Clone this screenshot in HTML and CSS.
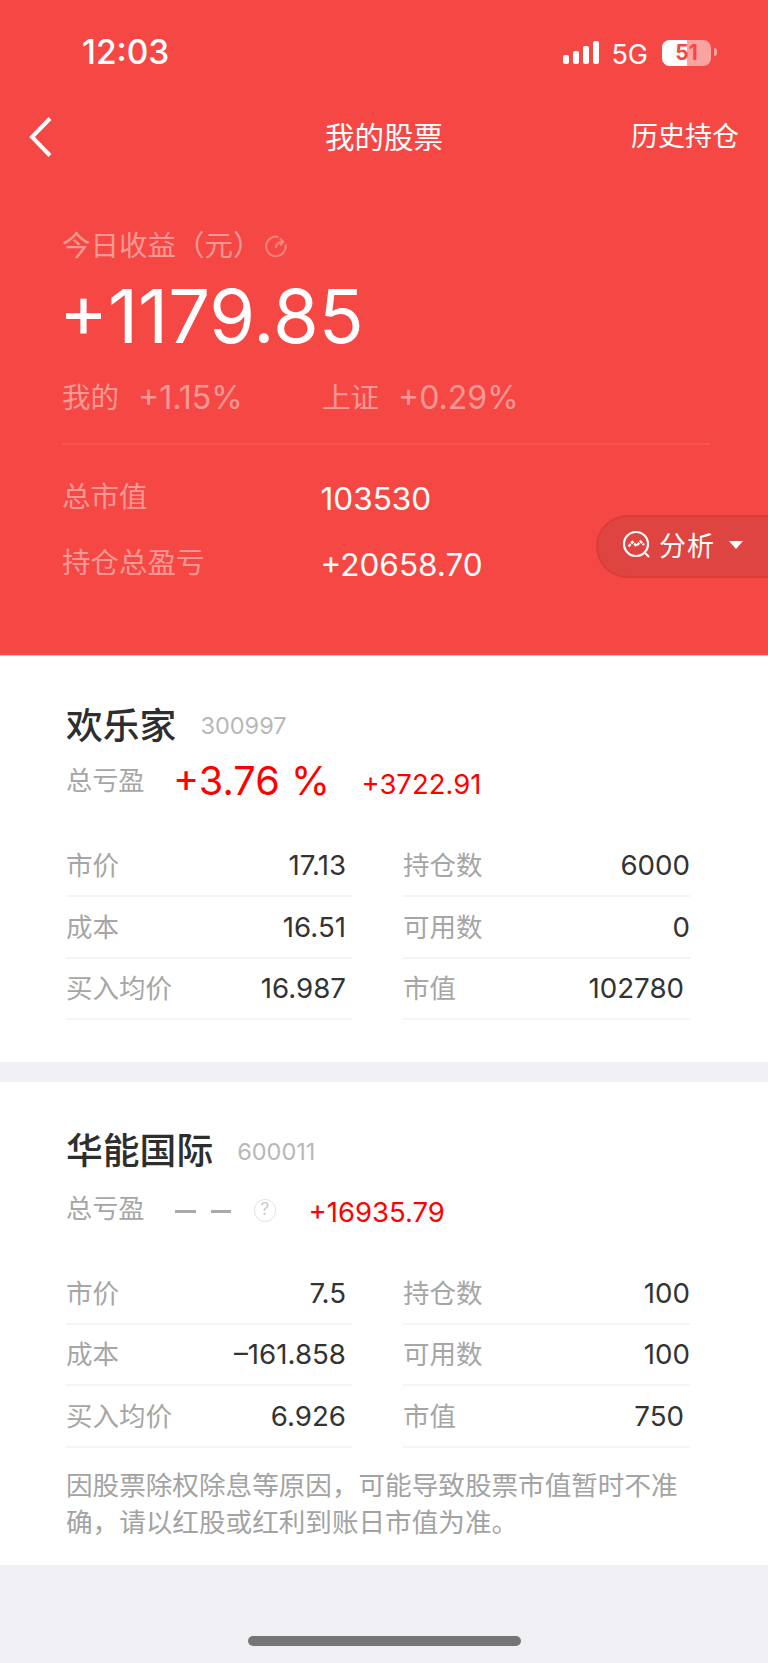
FILE: index.html
```html
<!DOCTYPE html>
<html lang="zh-CN">
<head>
<meta charset="utf-8">
<title>我的股票</title>
<link rel="stylesheet" href="styles.css">
</head>
<body>
<div class="page">
  <header class="hero">
    <div class="status">
      <span class="clock">12:03</span>
      <div class="status-right">
        <svg class="signal" width="38" height="23" viewBox="0 0 38 23"><rect x="1" y="14" width="6" height="9" rx="2"/><rect x="11" y="10" width="6" height="13" rx="2"/><rect x="21" y="5" width="6" height="18" rx="2"/><rect x="31" y="0" width="6" height="23" rx="2"/></svg>
        <span class="net">5G</span>
        <div class="battery"><div class="battery-fill"></div><span class="battery-num">51</span></div>
        <span class="battery-cap"></span>
      </div>
    </div>
    <nav class="navbar">
      <svg class="back" width="28" height="42" viewBox="0 0 28 42"><path d="M25 2.500 L7 21 L25 39.500" fill="none" stroke="#fff" stroke-width="4"/></svg>
      <span class="nav-title">我的股票</span>
      <span class="nav-action">历史持仓</span>
    </nav>
    <div class="summary">
      <div class="today-label">今日收益（元）
        <svg class="refresh" width="24" height="24" viewBox="0 0 24 24"><path d="M14.500 3 A9.800 9.800 0 1 0 21.500 10.500" fill="none" stroke="currentColor" stroke-width="2"/><path d="M12 14 C12 10 14 8 19 8 M16 4.500 L19.500 8 L16 11.500" fill="none" stroke="currentColor" stroke-width="2"/></svg>
      </div>
      <div class="today-value">+1179.85</div>
      <div class="compare">
        <div class="compare-item"><span class="compare-key">我的</span><span>+1.15%</span></div>
        <div class="compare-item"><span class="compare-key">上证</span><span>+0.29%</span></div>
      </div>
      <div class="totals">
        <div class="total-row"><span class="total-key">总市值</span><span class="total-val">103530</span></div>
        <div class="total-row"><span class="total-key">持仓总盈亏</span><span class="total-val">+20658.70</span></div>
      </div>
    </div>
    <div class="analysis">
      <svg width="29" height="29" viewBox="0 0 29 29"><circle cx="14" cy="14" r="12" fill="none" stroke="#fff" stroke-width="2.200"/><path d="M23 23 L27 27" stroke="#fff" stroke-width="2.200"/><path d="M6.500 16.500 L10.500 12 L14.500 16 L18.500 11.500 L22 15" fill="none" stroke="#fff" stroke-width="2.400" stroke-dasharray="3.200 1"/></svg>
      <span>分析</span>
      <i class="caret"></i>
    </div>
  </header>

  <section class="card card-first">
    <div class="stock-head"><h2 class="stock-name">欢乐家</h2><span class="stock-code">300997</span></div>
    <div class="pnl">
      <span class="pnl-label">总亏盈</span>
      <span class="pnl-rate">+3.76 %</span>
      <span class="pnl-amount">+3722.91</span>
    </div>
    <div class="grid">
      <div class="cell"><span class="key">市价</span><span class="val">17.13</span></div>
      <div class="cell"><span class="key">持仓数</span><span class="val">6000</span></div>
      <div class="cell"><span class="key">成本</span><span class="val">16.51</span></div>
      <div class="cell"><span class="key">可用数</span><span class="val">0</span></div>
      <div class="cell"><span class="key">买入均价</span><span class="val">16.987</span></div>
      <div class="cell"><span class="key">市值</span><span class="val inset">102780</span></div>
    </div>
  </section>

  <section class="card card-second">
    <div class="stock-head"><h2 class="stock-name">华能国际</h2><span class="stock-code">600011</span></div>
    <div class="pnl">
      <span class="pnl-label">总亏盈</span>
      <span class="pnl-dash"><i></i><i></i></span>
      <span class="help">?</span>
      <span class="pnl-amount wide">+16935.79</span>
    </div>
    <div class="grid">
      <div class="cell"><span class="key">市价</span><span class="val">7.5</span></div>
      <div class="cell"><span class="key">持仓数</span><span class="val">100</span></div>
      <div class="cell"><span class="key">成本</span><span class="val">–161.858</span></div>
      <div class="cell"><span class="key">可用数</span><span class="val">100</span></div>
      <div class="cell"><span class="key">买入均价</span><span class="val">6.926</span></div>
      <div class="cell"><span class="key">市值</span><span class="val inset">750</span></div>
    </div>
    <p class="note">因股票除权除息等原因，可能导致股票市值暂时不准确，请以红股或红利到账日市值为准。</p>
  </section>

  <div class="home-area"><div class="home-bar"></div></div>
</div>
</body>
</html>
```
FILE: styles.css
```css
* { box-sizing: border-box; }
html, body { margin: 0; padding: 0; }
body {
  width: 768px;
  height: 1663px;
  overflow: hidden;
  background: #efeff4;
  font-family: Inter, "Noto Sans CJK SC", sans-serif;
}
.page { display: flex; flex-direction: column; height: 1663px; }

/* red summary header */
.hero { position: relative; height: 655px; background: #f54844; color: #fff; flex: none; }
.status { height: 108px; padding: 34px 0 0 82px; display: flex; justify-content: space-between; }
.clock { font-size: 33.500px; font-weight: 500; line-height: 36px; }
.status-right { display: flex; align-items: flex-start; padding: 5px 57px 0 0; position: relative; }
.signal { fill: #fff; margin: 2px 0 0 0; }
.net { font-size: 27px; line-height: 32px; margin-left: 11px; }
.battery { position: relative; width: 49px; height: 26px; margin: 1px 0 0 14px; border-radius: 8px; background: rgba(255,255,255,.5); overflow: hidden; }
.battery-fill { width: 25px; height: 100%; background: #fff; }
.battery-num { position: absolute; inset: 0; text-align: center; color: #f54844; font-size: 21px; line-height: 26px; font-weight: 700; }
.battery-cap { position: absolute; right: 51px; top: 14px; width: 3px; height: 8px; border-radius: 0 3px 3px 0; background: rgba(255,255,255,.5); }

.navbar { height: 58px; position: relative; display: flex; align-items: center; justify-content: space-between; padding: 0 29px 0 24.500px; }
.back { display: block; }
.nav-title { position: absolute; left: 325px; top: 11px; font-size: 29.500px; line-height: 36px; }
.nav-action { font-size: 27px; line-height: 36px; }

.summary { padding: 62px 62px 0; }
.today-label { display: flex; align-items: center; font-size: 28.500px; line-height: 36px; height: 36px; color: rgba(255,255,255,.45); }
.refresh { margin-left: 2px; color: rgba(255,255,255,.32); }
.today-value { font-size: 74px; line-height: 80px; margin: 12px 0 0 -3px; }
.compare { display: flex; margin-top: 22px; padding-bottom: 25px; border-bottom: 2px solid rgba(255,255,255,.08); width: 648px; font-size: 32px; line-height: 40px; color: rgba(255,255,255,.45); }
.compare-item { width: 260px; display: flex; gap: 19px; }
.compare-key { font-size: 28.500px; }
.totals { margin-top: 17px; }
.total-row { display: flex; height: 65.800px; align-items: center; }
.total-key { width: 258.500px; font-size: 28.500px; color: rgba(255,255,255,.45); }
.total-val { font-size: 31.500px; padding-top: 7px; }

.analysis { position: absolute; right: -2px; top: 515px; width: 174px; height: 63px; border: 2px solid #d93d3a; border-right: 0; border-radius: 32px 0 0 32px; background: #de4541; display: flex; align-items: center; padding: 0 0 4px 24px; font-size: 27px; }
.analysis span { margin-left: 8px; letter-spacing: 1px; }
.caret { width: 0; height: 0; margin-left: 14px; border: 7px solid transparent; border-top: 8px solid #fff; border-bottom: 0; }

/* holding cards */
.card { background: #fff; padding: 0 78px 0 66px; flex: none; }
.card-first { height: 407px; padding-top: 46.500px; border-top: 1px solid #fbb; }
.card-second { height: 483px; margin-top: 20px; padding-top: 46px; }
.stock-head { display: flex; align-items: center; height: 46px; }
.stock-name { margin: 0; font-size: 36.800px; font-weight: 500; line-height: 46px; color: #2e2e2e; }
.stock-code { margin-left: 24px; font-size: 23.500px; color: #b8b8b8; }
.pnl { display: flex; align-items: center; height: 50px; margin-top: 5.500px; }
.card-second .pnl { margin-top: 7.500px; }
.pnl-label { font-size: 26.200px; color: #a6a6a6; width: 107px; }
.pnl-rate { font-size: 39.700px; color: #f00; width: 188.500px; padding-top: 4px; }
.pnl-amount { font-size: 27.500px; color: #f00; padding-top: 10px; }
.pnl-dash { display: flex; gap: 15px; width: 80.500px; padding: 10px 0 0 2px; }
.pnl-dash i { width: 20.500px; height: 3px; background: #aaa; }
.help { width: 22.500px; height: 22.500px; border: 1.500px solid #e2e2e2; border-radius: 50%; color: #c8c8c8; font-size: 17px; line-height: 19.500px; text-align: center; margin-top: 8px; }
.pnl-amount.wide { margin-left: 32.500px; padding-top: 10px; }

.grid { display: grid; grid-template-columns: 286px 287px; column-gap: 51px; margin-top: 31.500px; }
.cell { height: 61.500px; display: flex; justify-content: space-between; align-items: center; padding-right: 6px; border-bottom: 2px solid #f5f5f5; }
.cell:nth-child(even) { padding-right: 0; }
.key { font-size: 26.500px; color: #a6a6a6; padding-bottom: 3px; }
.val { font-size: 27.700px; color: #333; }
.val.inset { margin-right: 6px; }
.note { margin: 17px 0 0; font-family: "Noto Sans CJK SC", sans-serif; font-size: 26.600px; line-height: 37px; color: #a3a3a3; }

.home-area { flex: 1; position: relative; }
.home-bar { position: absolute; left: 248px; bottom: 17px; width: 273px; height: 10px; border-radius: 5px; background: #757577; }
```
